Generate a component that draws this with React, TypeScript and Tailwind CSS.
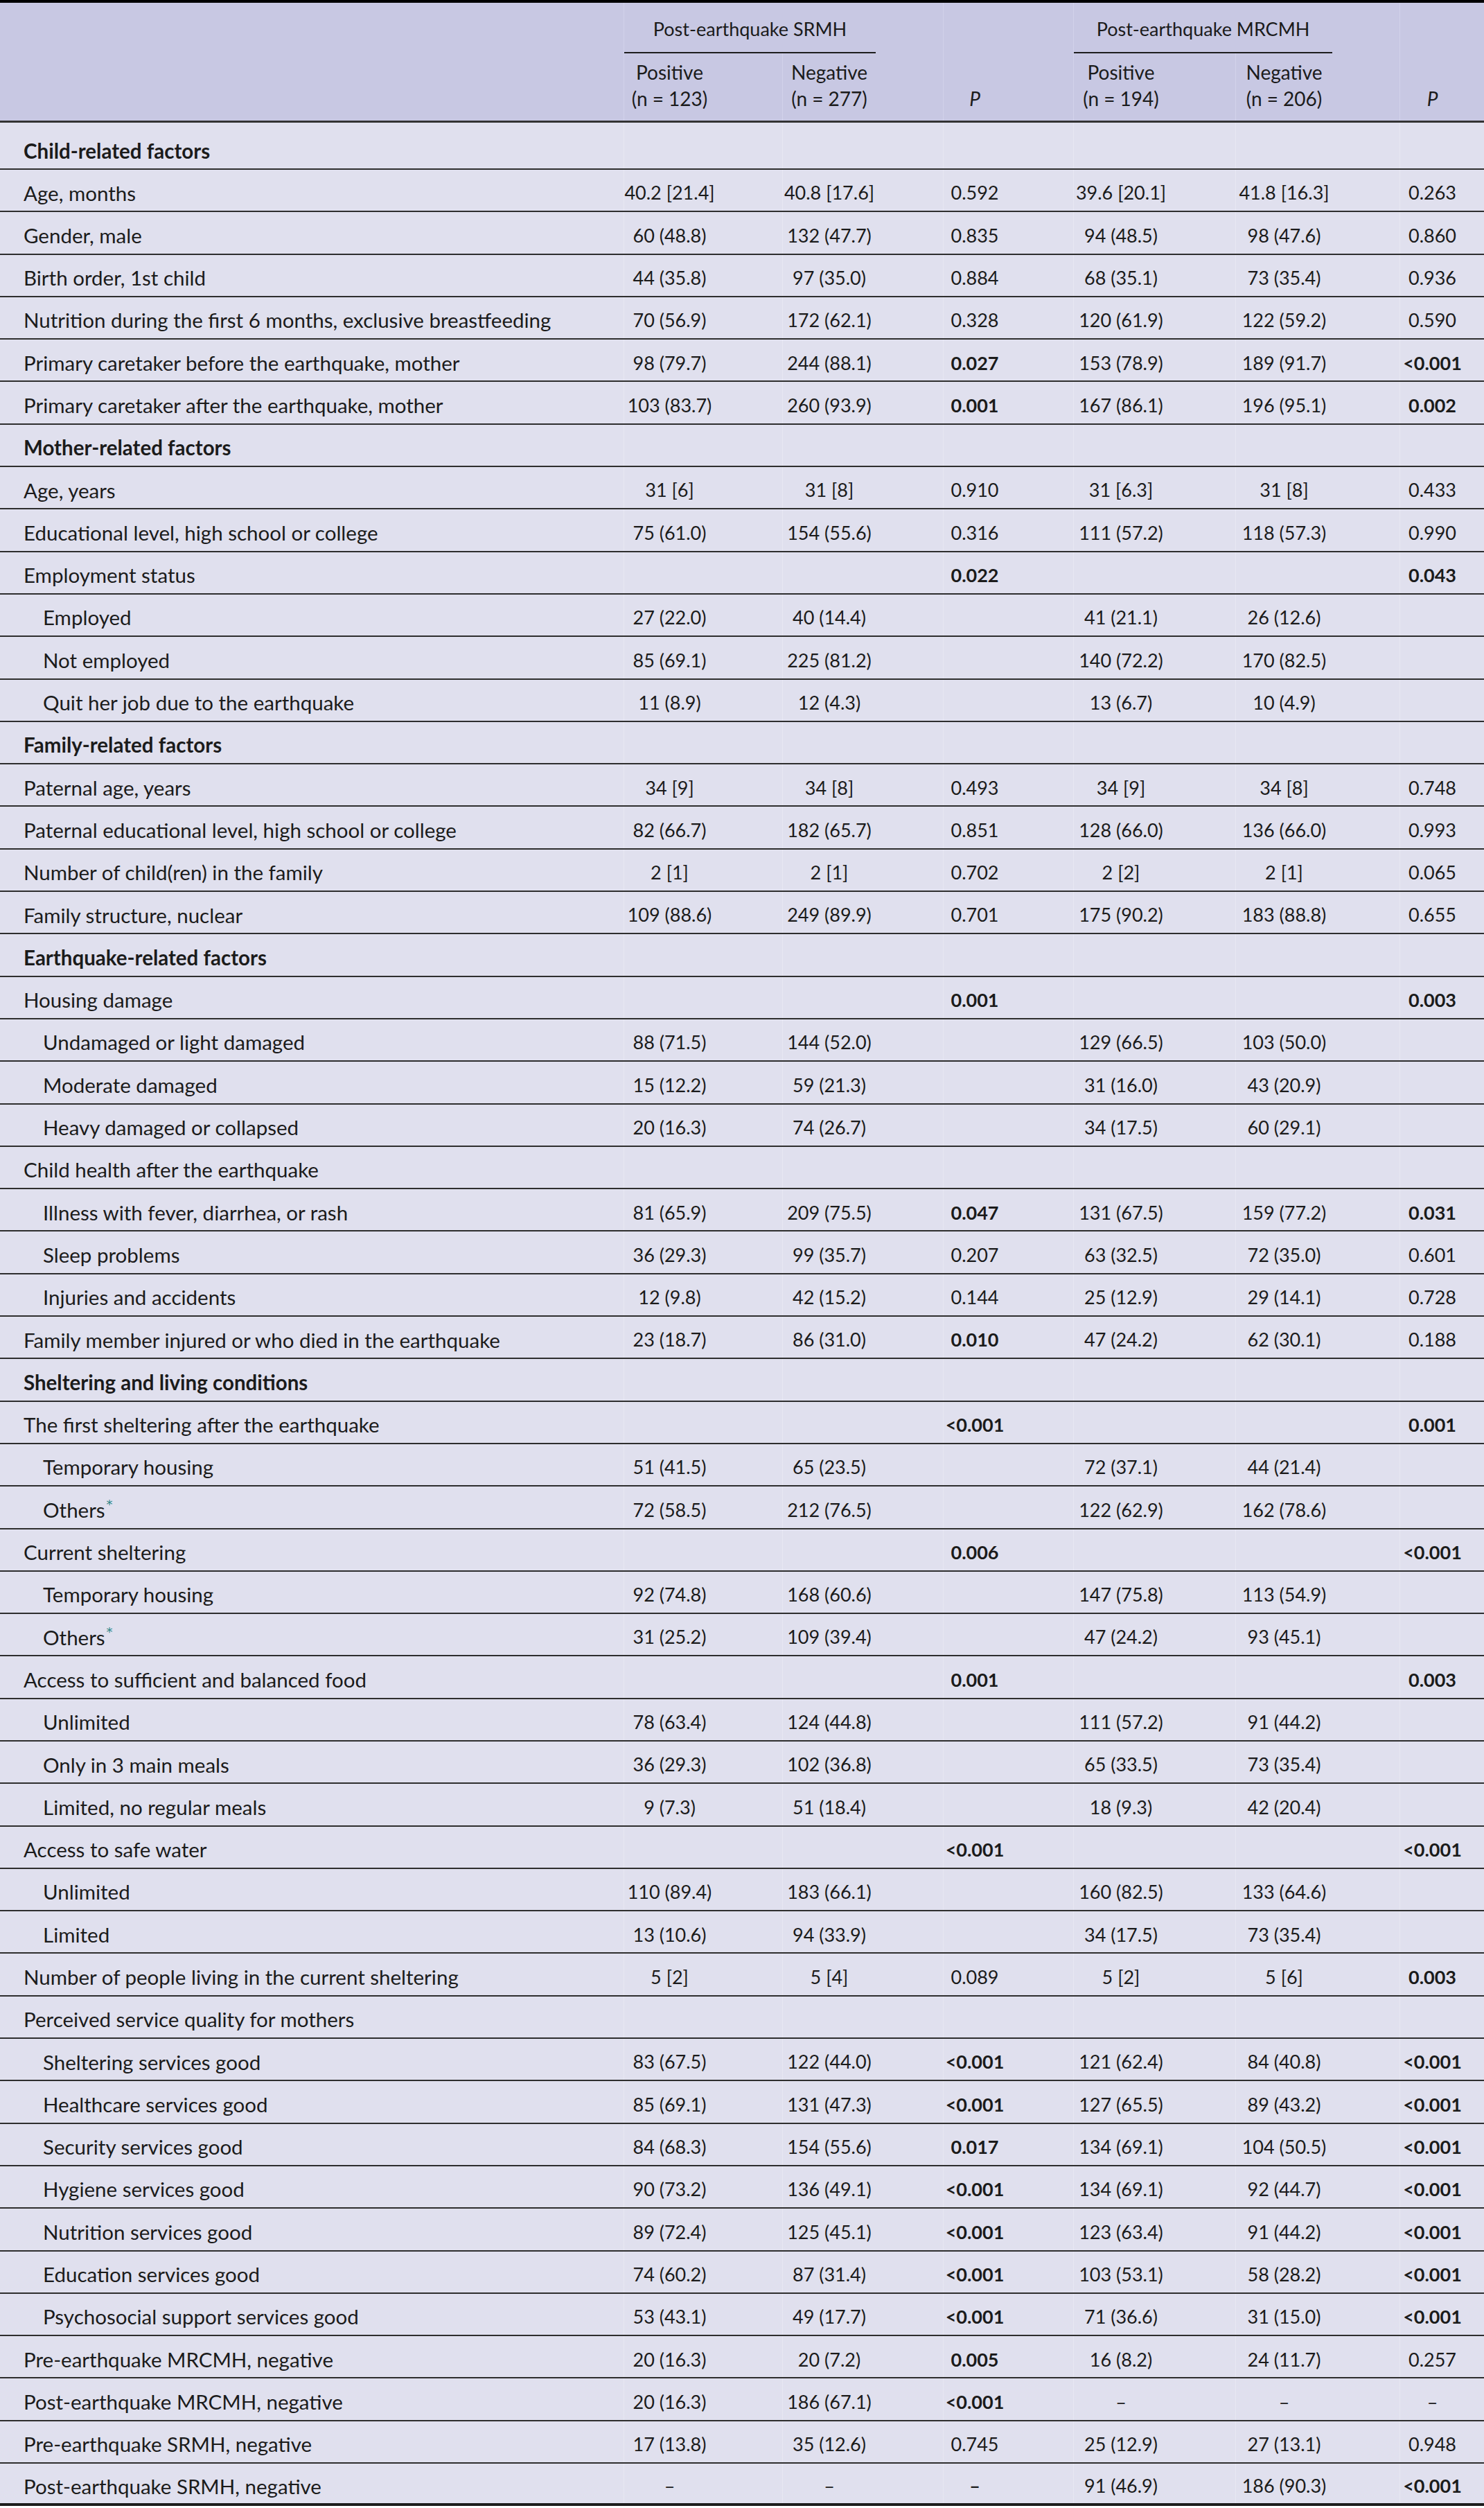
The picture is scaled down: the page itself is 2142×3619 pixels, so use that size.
type Row = {
  label: string;
  kind?: 'section' | 'sub' | 'plain';
  v?: string[];
  star?: boolean;
  boldDash?: boolean;
};

const COLS = 'grid-cols-[900px_229px_232px_188px_234px_237px_122px]';

const rows: Row[] = [
  { label: 'Child-related factors', kind: 'section' },
  { label: 'Age, months', v: ['40.2 [21.4]', '40.8 [17.6]', '0.592', '39.6 [20.1]', '41.8 [16.3]', '0.263'] },
  { label: 'Gender, male', v: ['60 (48.8)', '132 (47.7)', '0.835', '94 (48.5)', '98 (47.6)', '0.860'] },
  { label: 'Birth order, 1st child', v: ['44 (35.8)', '97 (35.0)', '0.884', '68 (35.1)', '73 (35.4)', '0.936'] },
  { label: 'Nutrition during the first 6 months, exclusive breastfeeding', v: ['70 (56.9)', '172 (62.1)', '0.328', '120 (61.9)', '122 (59.2)', '0.590'] },
  { label: 'Primary caretaker before the earthquake, mother', v: ['98 (79.7)', '244 (88.1)', '0.027', '153 (78.9)', '189 (91.7)', '<0.001'] },
  { label: 'Primary caretaker after the earthquake, mother', v: ['103 (83.7)', '260 (93.9)', '0.001', '167 (86.1)', '196 (95.1)', '0.002'] },
  { label: 'Mother-related factors', kind: 'section' },
  { label: 'Age, years', v: ['31 [6]', '31 [8]', '0.910', '31 [6.3]', '31 [8]', '0.433'] },
  { label: 'Educational level, high school or college', v: ['75 (61.0)', '154 (55.6)', '0.316', '111 (57.2)', '118 (57.3)', '0.990'] },
  { label: 'Employment status', v: ['', '', '0.022', '', '', '0.043'] },
  { label: 'Employed', kind: 'sub', v: ['27 (22.0)', '40 (14.4)', '', '41 (21.1)', '26 (12.6)', ''] },
  { label: 'Not employed', kind: 'sub', v: ['85 (69.1)', '225 (81.2)', '', '140 (72.2)', '170 (82.5)', ''] },
  { label: 'Quit her job due to the earthquake', kind: 'sub', v: ['11 (8.9)', '12 (4.3)', '', '13 (6.7)', '10 (4.9)', ''] },
  { label: 'Family-related factors', kind: 'section' },
  { label: 'Paternal age, years', v: ['34 [9]', '34 [8]', '0.493', '34 [9]', '34 [8]', '0.748'] },
  { label: 'Paternal educational level, high school or college', v: ['82 (66.7)', '182 (65.7)', '0.851', '128 (66.0)', '136 (66.0)', '0.993'] },
  { label: 'Number of child(ren) in the family', v: ['2 [1]', '2 [1]', '0.702', '2 [2]', '2 [1]', '0.065'] },
  { label: 'Family structure, nuclear', v: ['109 (88.6)', '249 (89.9)', '0.701', '175 (90.2)', '183 (88.8)', '0.655'] },
  { label: 'Earthquake-related factors', kind: 'section' },
  { label: 'Housing damage', v: ['', '', '0.001', '', '', '0.003'] },
  { label: 'Undamaged or light damaged', kind: 'sub', v: ['88 (71.5)', '144 (52.0)', '', '129 (66.5)', '103 (50.0)', ''] },
  { label: 'Moderate damaged', kind: 'sub', v: ['15 (12.2)', '59 (21.3)', '', '31 (16.0)', '43 (20.9)', ''] },
  { label: 'Heavy damaged or collapsed', kind: 'sub', v: ['20 (16.3)', '74 (26.7)', '', '34 (17.5)', '60 (29.1)', ''] },
  { label: 'Child health after the earthquake' },
  { label: 'Illness with fever, diarrhea, or rash', kind: 'sub', v: ['81 (65.9)', '209 (75.5)', '0.047', '131 (67.5)', '159 (77.2)', '0.031'] },
  { label: 'Sleep problems', kind: 'sub', v: ['36 (29.3)', '99 (35.7)', '0.207', '63 (32.5)', '72 (35.0)', '0.601'] },
  { label: 'Injuries and accidents', kind: 'sub', v: ['12 (9.8)', '42 (15.2)', '0.144', '25 (12.9)', '29 (14.1)', '0.728'] },
  { label: 'Family member injured or who died in the earthquake', v: ['23 (18.7)', '86 (31.0)', '0.010', '47 (24.2)', '62 (30.1)', '0.188'] },
  { label: 'Sheltering and living conditions', kind: 'section' },
  { label: 'The first sheltering after the earthquake', v: ['', '', '<0.001', '', '', '0.001'] },
  { label: 'Temporary housing', kind: 'sub', v: ['51 (41.5)', '65 (23.5)', '', '72 (37.1)', '44 (21.4)', ''] },
  { label: 'Others', kind: 'sub', star: true, v: ['72 (58.5)', '212 (76.5)', '', '122 (62.9)', '162 (78.6)', ''] },
  { label: 'Current sheltering', v: ['', '', '0.006', '', '', '<0.001'] },
  { label: 'Temporary housing', kind: 'sub', v: ['92 (74.8)', '168 (60.6)', '', '147 (75.8)', '113 (54.9)', ''] },
  { label: 'Others', kind: 'sub', star: true, v: ['31 (25.2)', '109 (39.4)', '', '47 (24.2)', '93 (45.1)', ''] },
  { label: 'Access to sufficient and balanced food', v: ['', '', '0.001', '', '', '0.003'] },
  { label: 'Unlimited', kind: 'sub', v: ['78 (63.4)', '124 (44.8)', '', '111 (57.2)', '91 (44.2)', ''] },
  { label: 'Only in 3 main meals', kind: 'sub', v: ['36 (29.3)', '102 (36.8)', '', '65 (33.5)', '73 (35.4)', ''] },
  { label: 'Limited, no regular meals', kind: 'sub', v: ['9 (7.3)', '51 (18.4)', '', '18 (9.3)', '42 (20.4)', ''] },
  { label: 'Access to safe water', v: ['', '', '<0.001', '', '', '<0.001'] },
  { label: 'Unlimited', kind: 'sub', v: ['110 (89.4)', '183 (66.1)', '', '160 (82.5)', '133 (64.6)', ''] },
  { label: 'Limited', kind: 'sub', v: ['13 (10.6)', '94 (33.9)', '', '34 (17.5)', '73 (35.4)', ''] },
  { label: 'Number of people living in the current sheltering', v: ['5 [2]', '5 [4]', '0.089', '5 [2]', '5 [6]', '0.003'] },
  { label: 'Perceived service quality for mothers' },
  { label: 'Sheltering services good', kind: 'sub', v: ['83 (67.5)', '122 (44.0)', '<0.001', '121 (62.4)', '84 (40.8)', '<0.001'] },
  { label: 'Healthcare services good', kind: 'sub', v: ['85 (69.1)', '131 (47.3)', '<0.001', '127 (65.5)', '89 (43.2)', '<0.001'] },
  { label: 'Security services good', kind: 'sub', v: ['84 (68.3)', '154 (55.6)', '0.017', '134 (69.1)', '104 (50.5)', '<0.001'] },
  { label: 'Hygiene services good', kind: 'sub', v: ['90 (73.2)', '136 (49.1)', '<0.001', '134 (69.1)', '92 (44.7)', '<0.001'] },
  { label: 'Nutrition services good', kind: 'sub', v: ['89 (72.4)', '125 (45.1)', '<0.001', '123 (63.4)', '91 (44.2)', '<0.001'] },
  { label: 'Education services good', kind: 'sub', v: ['74 (60.2)', '87 (31.4)', '<0.001', '103 (53.1)', '58 (28.2)', '<0.001'] },
  { label: 'Psychosocial support services good', kind: 'sub', v: ['53 (43.1)', '49 (17.7)', '<0.001', '71 (36.6)', '31 (15.0)', '<0.001'] },
  { label: 'Pre-earthquake MRCMH, negative', v: ['20 (16.3)', '20 (7.2)', '0.005', '16 (8.2)', '24 (11.7)', '0.257'] },
  { label: 'Post-earthquake MRCMH, negative', v: ['20 (16.3)', '186 (67.1)', '<0.001', '–', '–', '–'] },
  { label: 'Pre-earthquake SRMH, negative', v: ['17 (13.8)', '35 (12.6)', '0.745', '25 (12.9)', '27 (13.1)', '0.948'] },
  { label: 'Post-earthquake SRMH, negative', boldDash: true, v: ['–', '–', '–', '91 (46.9)', '186 (90.3)', '<0.001'] },
];

// p-values under 0.05 are set in bold
function isSig(p: string) {
  if (p.startsWith('<')) return true;
  const n = parseFloat(p);
  return !Number.isNaN(n) && n < 0.05;
}

function Cell({ text, bold, last }: { text: string; bold?: boolean; last?: boolean }) {
  return (
    <div
      className={`flex items-center justify-center border-l border-[#e7e7f2] pt-[8px] text-[27px] ${last ? 'pr-[28px]' : 'pr-[97px]'} ${bold ? 'font-bold' : ''}`}
    >
      {text}
    </div>
  );
}

function BodyRow({ row, first, end }: { row: Row; first: boolean; end: boolean }) {
  const v = row.v ?? ['', '', '', '', '', ''];
  const height = first ? 'h-[68px]' : 'h-[61.3px]';
  const border = end ? 'border-b-[4px] border-[#1c1c1c]' : 'border-b-2 border-[#2e2e2e]';
  const pad = first ? 'pt-[16px]' : 'pt-[8px]';
  return (
    <div className={`grid ${COLS} ${height} ${border}`}>
      <div
        className={`flex items-center text-[29.5px] ${pad} ${row.kind === 'sub' ? 'pl-[62px]' : 'pl-[34px]'} ${row.kind === 'section' ? 'font-bold' : ''}`}
      >
        {row.label}
        {row.star && (
          <span className="relative -top-[8px] ml-[2px] font-['DejaVu_Sans',sans-serif] text-[18px] text-[#2b8585]">*</span>
        )}
      </div>
      {v.map((t, i) => {
        const isP = i === 2 || i === 5;
        const bold = isP && (isSig(t) || (row.boldDash && t === '–'));
        return <Cell key={i} text={t} bold={!!bold} last={i === 5} />;
      })}
    </div>
  );
}

function SubHead({ top, n }: { top: string; n: string }) {
  return (
    <div className="border-l border-[#d2d2ea] pr-[97px] pt-[8px] text-center leading-[38px]">
      <div>{top}</div>
      <div>{n}</div>
    </div>
  );
}

function Header() {
  return (
    <div className={`grid ${COLS} grid-rows-[73px_97px] bg-[#c8c8e3] border-b-[3px] border-[#333] text-[28px]`}>
      <div className="row-span-2" />
      <div className="col-span-2 border-l border-[#d2d2ea] pr-[97px]">
        <div className="flex h-full items-center justify-center border-b-2 border-[#1e1e1e] pt-[6px] text-[27px]">
          Post-earthquake SRMH
        </div>
      </div>
      <div className="row-span-2 border-l border-[#d2d2ea] pr-[97px] pt-[119px] text-center leading-[38px] italic">
        P
      </div>
      <div className="col-span-2 border-l border-[#d2d2ea] pr-[97px]">
        <div className="flex h-full items-center justify-center border-b-2 border-[#1e1e1e] pt-[6px] text-[27px]">
          Post-earthquake MRCMH
        </div>
      </div>
      <div className="row-span-2 border-l border-[#d2d2ea] pr-[28px] pt-[119px] text-center leading-[38px] italic">
        P
      </div>
      <SubHead top="Positive" n="(n = 123)" />
      <SubHead top="Negative" n="(n = 277)" />
      <SubHead top="Positive" n="(n = 194)" />
      <SubHead top="Negative" n="(n = 206)" />
    </div>
  );
}

export default function App() {
  return (
    <div className="w-[2142px] bg-white font-['Lato',sans-serif] text-[27px] text-[#1b1b1b]">
      <div className="border-t-[4px] border-black">
        <Header />
        <div className="bg-[#e0e0ee]">
          {rows.map((r, i) => (
            <BodyRow key={i} row={r} first={i === 0} end={i === rows.length - 1} />
          ))}
        </div>
      </div>
    </div>
  );
}
